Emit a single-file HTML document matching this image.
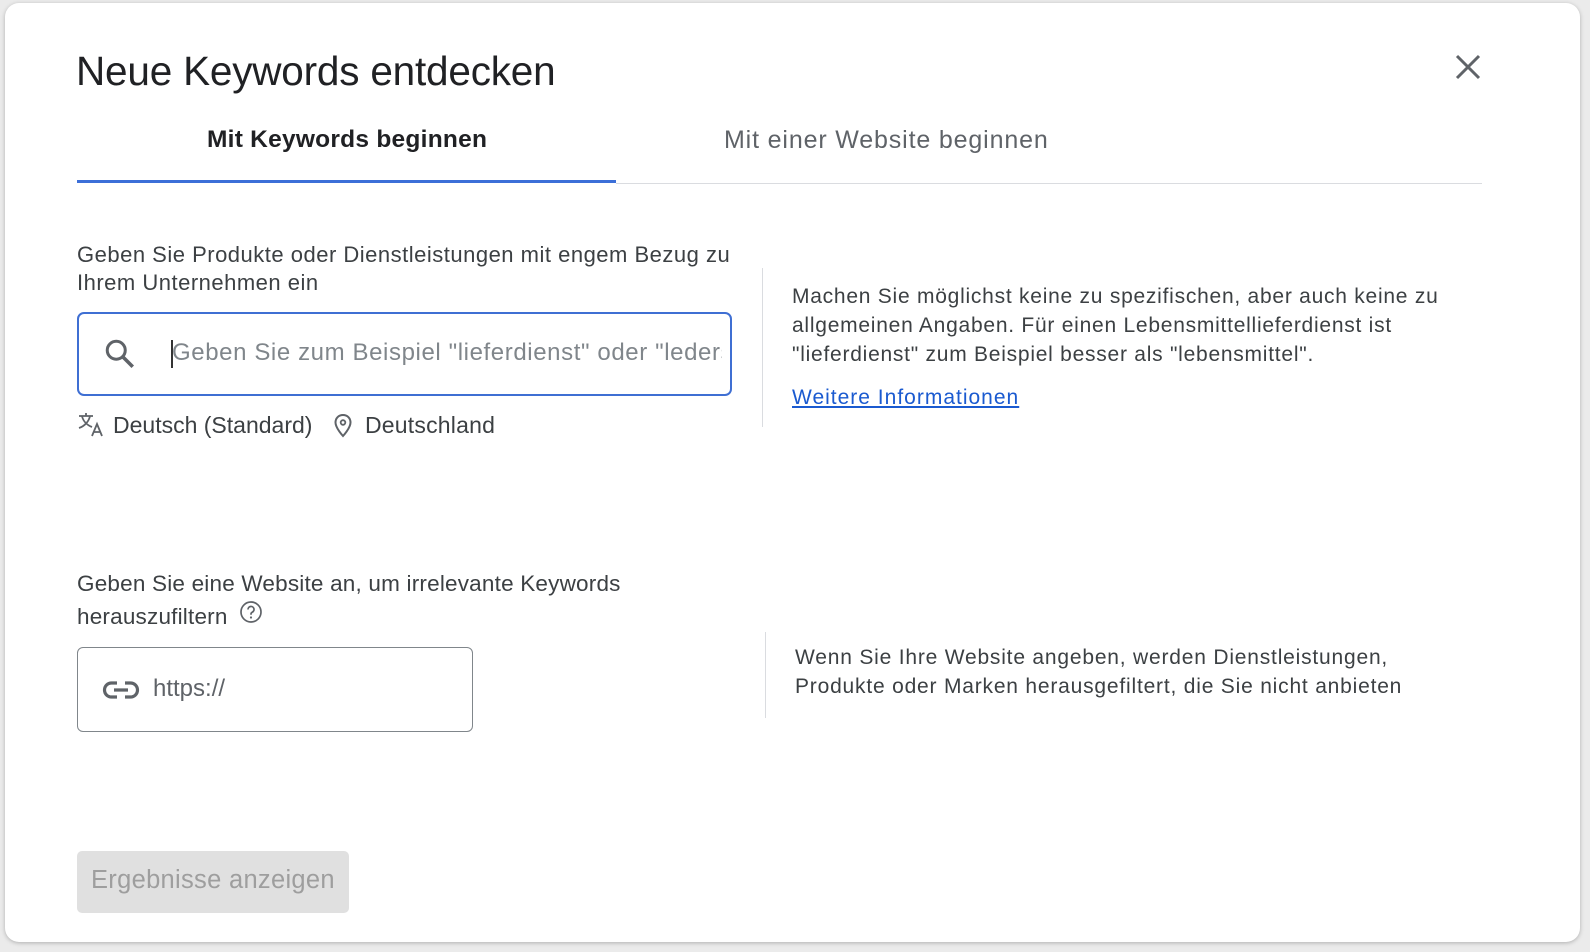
<!DOCTYPE html>
<html><head><meta charset="utf-8"><style>
*{margin:0;padding:0;box-sizing:border-box}
body{width:1590px;height:952px;background:#ebebeb;font-family:"Liberation Sans",sans-serif;position:relative;overflow:hidden}
.card{position:absolute;left:5px;top:3px;width:1575px;height:939px;background:#fff;border-radius:14px;box-shadow:0 1px 4px rgba(0,0,0,.25)}
.a{position:absolute;white-space:nowrap}
</style></head><body>
<div class="card"></div>
<div class="a" style="left:76px;top:48px;font-size:40.5px;color:#202124;letter-spacing:-0.2px">Neue Keywords entdecken</div>
<svg class="a" style="left:1454px;top:53px" width="28" height="28" viewBox="0 0 28 28"><path d="M3 3L25 25M25 3L3 25" stroke="#5f6368" stroke-width="3"/></svg>
<div class="a" style="left:207px;top:126px;font-size:24.5px;font-weight:bold;color:#202124;letter-spacing:0.25px">Mit Keywords beginnen</div>
<div class="a" style="left:724px;top:126px;font-size:25px;color:#5f6368;letter-spacing:0.85px">Mit einer Website beginnen</div>
<div class="a" style="left:616px;top:183px;width:866px;height:1px;background:#dadce0"></div>
<div class="a" style="left:77px;top:180px;width:539px;height:3px;background:#3c6fd8"></div>

<div class="a" style="left:77px;top:241px;font-size:22px;line-height:28px;color:#3c4043;letter-spacing:0.5px">Geben Sie Produkte oder Dienstleistungen mit engem Bezug zu<br>Ihrem Unternehmen ein</div>
<div class="a" style="left:77px;top:312px;width:655px;height:84px;border:2.5px solid #3f6fd3;border-radius:7px"></div>
<svg class="a" style="left:102px;top:336px" width="36" height="36" viewBox="0 0 24 24"><circle cx="9.5" cy="9.5" r="6" fill="none" stroke="#5f6368" stroke-width="2"/><path d="M14 14l6.5 6.5" stroke="#5f6368" stroke-width="2.4"/></svg>
<div class="a" style="left:171px;top:340px;width:1.5px;height:28px;background:#333"></div>
<div class="a" style="left:172px;top:339px;width:550px;overflow:hidden;font-size:24px;color:#80868b;letter-spacing:0.6px">Geben Sie zum Beispiel "lieferdienst" oder "lederschuhe" ein</div>
<svg class="a" style="left:77px;top:412px" width="28" height="26" viewBox="0 0 28 26"><path d="M2 4h14M9 1v3M5 4c1 5 5 9 10 11M13 4c-1 5-5 10-11 12" fill="none" stroke="#5f6368" stroke-width="1.8"/><path d="M15 24l5-12 5 12M17 20h6" fill="none" stroke="#5f6368" stroke-width="1.8"/></svg>
<div class="a" style="left:113px;top:412px;font-size:23px;color:#3c4043">Deutsch (Standard)</div>
<svg class="a" style="left:332px;top:413px" width="22" height="26" viewBox="0 0 22 26"><path d="M11 2C6.5 2 3.5 5.3 3.5 9.5 3.5 15 11 23 11 23s7.5-8 7.5-13.5C18.5 5.3 15.5 2 11 2z" fill="none" stroke="#5f6368" stroke-width="2"/><circle cx="11" cy="9.5" r="2.3" fill="none" stroke="#5f6368" stroke-width="1.8"/></svg>
<div class="a" style="left:365px;top:412px;font-size:23px;color:#3c4043;letter-spacing:0.2px">Deutschland</div>

<div class="a" style="left:762px;top:268px;width:1px;height:159px;background:#dadce0"></div>
<div class="a" style="left:792px;top:282px;font-size:21px;line-height:29px;color:#3c4043;letter-spacing:0.75px">Machen Sie möglichst keine zu spezifischen, aber auch keine zu<br>allgemeinen Angaben. Für einen Lebensmittellieferdienst ist<br>"lieferdienst" zum Beispiel besser als "lebensmittel".</div>
<div class="a" style="left:792px;top:386px;font-size:21px;color:#1a5ad0;text-decoration:underline;letter-spacing:1px">Weitere Informationen</div>

<div class="a" style="left:77px;top:567px;font-size:22.5px;line-height:33px;color:#3c4043;letter-spacing:0.2px">Geben Sie eine Website an, um irrelevante Keywords<br>herauszufiltern</div>
<svg class="a" style="left:239px;top:600px" width="24" height="24" viewBox="0 0 24 24"><circle cx="12" cy="12" r="10" fill="none" stroke="#5f6368" stroke-width="1.7"/><path d="M9 9.5a3 3 0 1 1 4.2 2.7c-.8.4-1.2 1-1.2 1.8v.8" fill="none" stroke="#5f6368" stroke-width="1.7"/><circle cx="12" cy="17.5" r="1.1" fill="#5f6368"/></svg>
<div class="a" style="left:77px;top:647px;width:396px;height:85px;border:1px solid #80868b;border-radius:6px"></div>
<svg class="a" style="left:102px;top:678px" width="38" height="24" viewBox="0 0 38 24"><path d="M15 5H9.5a7 7 0 0 0 0 14H15M23 5h5.5a7 7 0 0 1 0 14H23M12 12h14" fill="none" stroke="#5f6368" stroke-width="3.2"/></svg>
<div class="a" style="left:153px;top:675px;font-size:24px;color:#5f6368">https://</div>

<div class="a" style="left:765px;top:632px;width:1px;height:86px;background:#dadce0"></div>
<div class="a" style="left:795px;top:643px;font-size:21px;line-height:29px;color:#3c4043;letter-spacing:0.8px">Wenn Sie Ihre Website angeben, werden Dienstleistungen,<br>Produkte oder Marken herausgefiltert, die Sie nicht anbieten</div>

<div class="a" style="left:77px;top:851px;width:272px;height:62px;background:#e0e0e0;border-radius:5px"></div>
<div class="a" style="left:91px;top:866px;font-size:25.5px;color:#9e9e9e;letter-spacing:0.3px">Ergebnisse anzeigen</div>
</body></html>
